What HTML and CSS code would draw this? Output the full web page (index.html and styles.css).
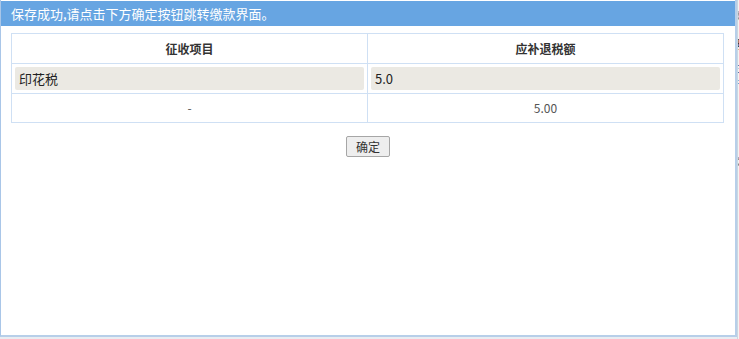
FILE: index.html
```html
<!DOCTYPE html>
<html lang="zh-CN">
<head>
    <meta charset="UTF-8">
    <title>提示</title>
    <link rel="stylesheet" href="styles.css">
</head>
<body>
    <div class="dialog">
        <div class="dialog-title">保存成功,请点击下方确定按钮跳转缴款界面。</div>
        <div class="dialog-body">
            <table class="tax-table">
                <tr class="head-row">
                    <th>征收项目</th>
                    <th>应补退税额</th>
                </tr>
                <tr class="input-row">
                    <td><div class="field">印花税</div></td>
                    <td><div class="field">5.0</div></td>
                </tr>
                <tr class="sum-row">
                    <td>-</td>
                    <td>5.00</td>
                </tr>
            </table>
            <div class="actions">
                <button class="ok-btn">确定</button>
            </div>
        </div>
    </div>
    <div class="behind">
        <span class="frag f1">类</span>
        <span class="frag f2">毋</span>
        <span class="frag f3">E</span>
        <span class="frag f4">扌</span>
        <span class="frag f5">(</span>
        <span class="frag f6">文</span>
    </div>
</body>
</html>
```

FILE: styles.css
```css
body {
    margin: 0;
    font-family: "Noto Sans CJK SC", "Liberation Sans", sans-serif;
    background: #e9edf2;
    display: flex;
    height: 339px;
    overflow: hidden;
}
.dialog {
    width: 734px;
    height: 335px;
    background: white;
    border: 1px solid #a9c6e8;
    border-top: 0;
    border-right: 2px solid #b7cfe9;
    border-bottom: 2px solid #b7cfe9;
    flex-shrink: 0;
}
.dialog-title {
    height: 25px;
    line-height: 25px;
    margin-top: 1px;
    background: #67a5e2;
    color: white;
    font-size: 13px;
    padding-left: 10px;
}
.dialog-body {
    padding: 7px 10px;
}
.tax-table {
    width: 713px;
    border-collapse: collapse;
    border: 1px solid #cfe0f4;
    table-layout: fixed;
    line-height: 16px;
}
.tax-table th,
.tax-table td {
    border: 1px solid #cfe0f4;
    text-align: center;
    padding: 0;
}
.head-row th {
    height: 29px;
    font-size: 12px;
    font-weight: bold;
    color: #333;
}
.input-row td {
    padding: 3px;
}
.field {
    height: 23px;
    line-height: 23px;
    background: #ebe9e3;
    border-radius: 2px;
    text-align: left;
    padding-left: 4px;
    font-size: 13px;
    color: #222;
}
.sum-row td {
    height: 28px;
    font-size: 12px;
    color: #555;
}
.actions {
    display: flex;
    justify-content: center;
    margin-top: 13px;
}
.ok-btn {
    width: 44px;
    height: 21px;
    padding: 0;
    font-family: inherit;
    font-size: 12px;
    line-height: 19px;
    color: #333;
    background: #eeeeee;
    border: 1px solid #a6a6a6;
    border-radius: 2px;
}
.behind {
    flex: 1;
    position: relative;
    background: #f3f3f3;
    overflow: hidden;
    border-left: 1px solid #ccd6e0;
}
.frag {
    position: absolute;
    left: -5px;
    font-size: 11px;
    line-height: 12px;
    color: #333;
}
.f1 { top: 10px; color: #999; }
.f2 { top: 38px; }
.f3 { top: 62px; }
.f4 { top: 77px; }
.f5 { top: 130px; font-weight: bold; }
.f6 { top: 156px; color: #888; }
```
